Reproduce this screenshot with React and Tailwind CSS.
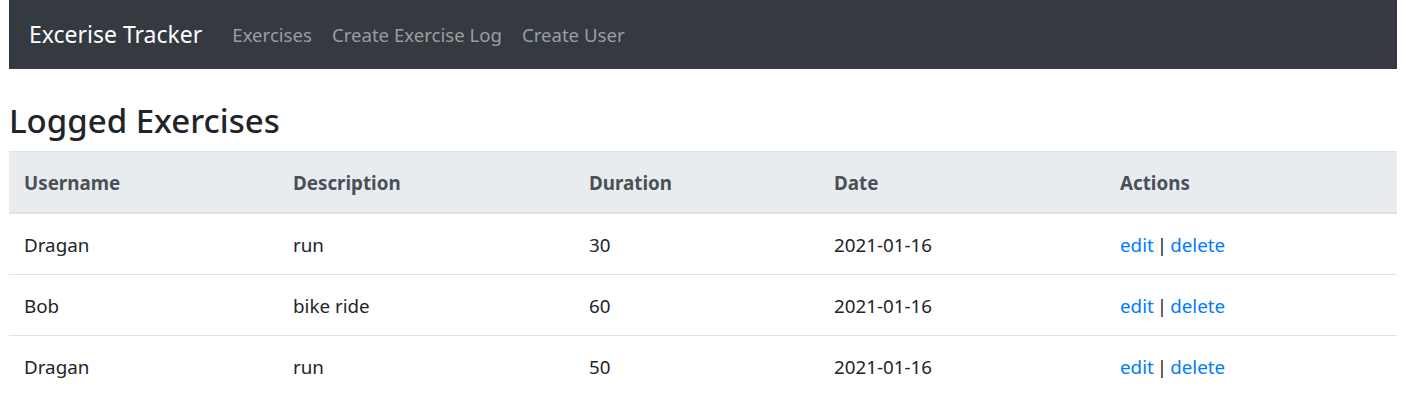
import React from 'react';

const exercises = [
    { username: 'Dragan', description: 'run', duration: 30, date: '2021-01-16' },
    { username: 'Bob', description: 'bike ride', duration: 60, date: '2021-01-16' },
    { username: 'Dragan', description: 'run', duration: 50, date: '2021-01-16' },
];

function Navbar() {
    return (
        <nav className="h-[69px] bg-[#343a40] flex items-center px-[20px]">
            <span className="text-[23px] text-white mr-[20px]">Excerise Tracker</span>
            <ul className="flex items-center text-[18.6px] text-[#9a9da0]">
                <li className="px-[10px]">Exercises</li>
                <li className="px-[10px]">Create Exercise Log</li>
                <li className="px-[10px]">Create User</li>
            </ul>
        </nav>
    );
}

function ExerciseRow({ exercise }) {
    return (
        <tr className="border-t border-[#dee2e6]">
            <td className="px-[15px] pt-[16px] pb-[14px] leading-[30px]">{exercise.username}</td>
            <td className="px-[15px] pt-[16px] pb-[14px] leading-[30px]">{exercise.description}</td>
            <td className="px-[15px] pt-[16px] pb-[14px] leading-[30px]">{exercise.duration}</td>
            <td className="px-[15px] pt-[16px] pb-[14px] leading-[30px]">{exercise.date}</td>
            <td className="px-[15px] pt-[16px] pb-[14px] leading-[30px]">
                <a href="#" className="text-[#007bff]">edit</a><span className="px-[3px]">|</span><a href="#" className="text-[#007bff]">delete</a>
            </td>
        </tr>
    );
}

export default function App() {
    return (
        <div className="bg-white min-h-[412px] font-['Noto_Sans',sans-serif] text-[#212529] text-[18.8px]">
            <div className="ml-[9px] w-[1388px]">
                <Navbar />
                <div className="pt-[31px]">
                    <h3 className="text-[33px] leading-[42px] font-medium mb-[9px]">Logged Exercises</h3>
                    <table className="w-full border-collapse text-left">
                        <thead className="bg-[#e9ecef] text-[#495057]">
                            <tr className="border-t border-[#dee2e6] border-b-2">
                                <th className="w-[269px] px-[15px] pt-[16px] pb-[14px] leading-[30px] font-bold">Username</th>
                                <th className="w-[296px] px-[15px] pt-[16px] pb-[14px] leading-[30px] font-bold">Description</th>
                                <th className="w-[245px] px-[15px] pt-[16px] pb-[14px] leading-[30px] font-bold">Duration</th>
                                <th className="w-[286px] px-[15px] pt-[16px] pb-[14px] leading-[30px] font-bold">Date</th>
                                <th className="px-[15px] pt-[16px] pb-[14px] leading-[30px] font-bold">Actions</th>
                            </tr>
                        </thead>
                        <tbody>
                            {exercises.map((ex, i) => <ExerciseRow key={i} exercise={ex} />)}
                        </tbody>
                    </table>
                </div>
            </div>
        </div>
    );
}
